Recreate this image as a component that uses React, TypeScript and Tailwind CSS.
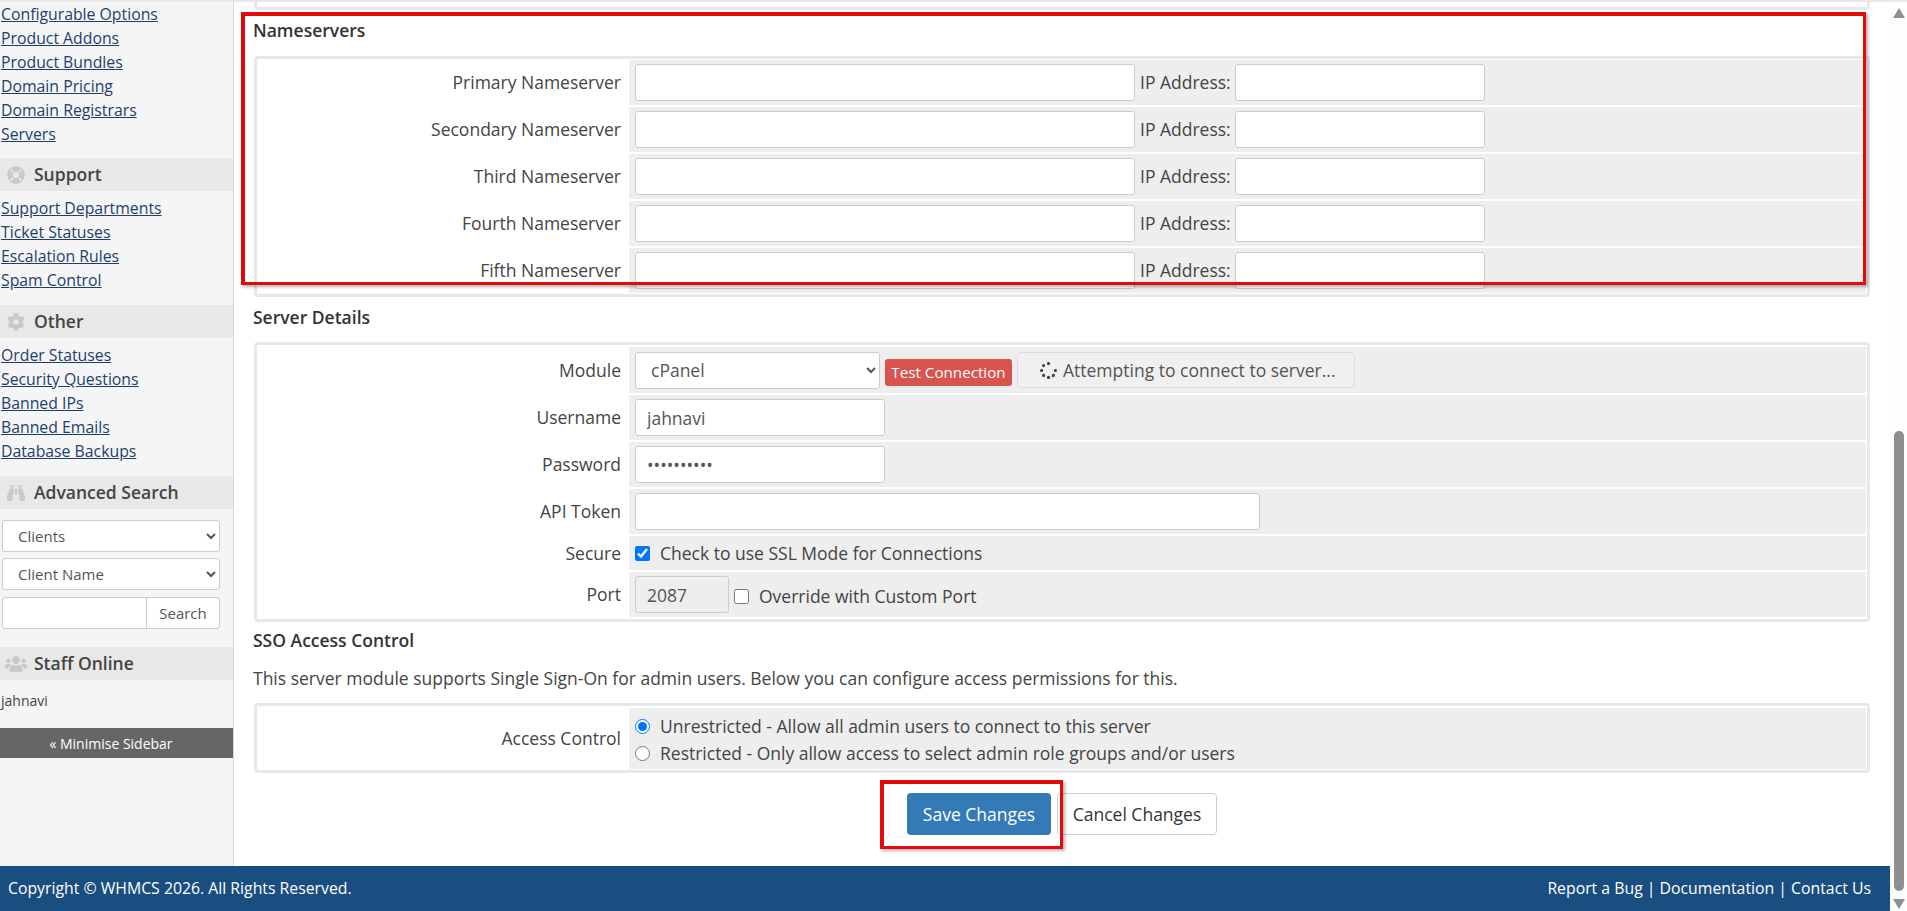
import type { ReactNode } from "react";
import { FaBinoculars, FaCog, FaLifeRing, FaSpinner, FaUsers } from "react-icons/fa";

const font = "font-['Open_Sans',sans-serif]";

function SideHeader({ icon, title }: { icon: ReactNode; title: string }) {
  return (
    <div className="flex h-[33px] items-center bg-[#e8e8e8]">
      <span className="flex w-[34px] justify-center pr-[3px] text-[18px] text-[#c8c8c8]">{icon}</span>
      <span className="text-[17.5px] font-semibold text-[#444]">{title}</span>
    </div>
  );
}

function SideLinks({ links, className }: { links: string[]; className: string }) {
  return (
    <ul className={className}>
      {links.map((link) => (
        <li key={link} className="h-[24px] pl-[1px] text-[15.8px] leading-[24px] text-[#1d3f6e] underline">
          {link}
        </li>
      ))}
    </ul>
  );
}

function Sidebar() {
  return (
    <aside className="w-[234px] shrink-0 border-r border-[#d8d8d8] bg-[#f5f5f5]">
      <SideLinks
        className="mb-[12px]"
        links={["Configurable Options", "Product Addons", "Product Bundles", "Domain Pricing", "Domain Registrars", "Servers"]}
      />
      <SideHeader icon={<FaLifeRing />} title="Support" />
      <SideLinks
        className="mb-[13px] mt-[5px]"
        links={["Support Departments", "Ticket Statuses", "Escalation Rules", "Spam Control"]}
      />
      <SideHeader icon={<FaCog />} title="Other" />
      <SideLinks
        className="mb-[13px] mt-[5px]"
        links={["Order Statuses", "Security Questions", "Banned IPs", "Banned Emails", "Database Backups"]}
      />
      <SideHeader icon={<FaBinoculars />} title="Advanced Search" />
      <div className="mt-[11px] flex flex-col gap-[6px] pl-[2px] pr-[13px] text-[15px] text-[#555]">
        <select className="h-[32px] rounded-[3px] border border-[#ccc] bg-white pl-[11px]" defaultValue="Clients">
          <option>Clients</option>
        </select>
        <select className="h-[32px] rounded-[3px] border border-[#ccc] bg-white pl-[11px]" defaultValue="Client Name">
          <option>Client Name</option>
        </select>
        <div className="mt-[1px] flex h-[32px] rounded-[3px] border border-[#ccc] bg-white">
          <input className="w-[144px] border-r border-[#ccc] outline-none" />
          <span className="flex-1 text-center text-[15px] leading-[30px]">Search</span>
        </div>
      </div>
      <div className="mt-[18px]">
        <SideHeader icon={<FaUsers className="text-[22px]" />} title="Staff Online" />
      </div>
      <div className="mt-[9px] h-[24px] pl-[1px] text-[14px] leading-[24px] text-[#444]">jahnavi</div>
      <div className="mt-[15px] flex h-[30px] items-center justify-center bg-[#666] pr-[11px] text-[14px] text-white">
        « Minimise Sidebar
      </div>
    </aside>
  );
}

function Panel({ children, className }: { children: ReactNode; className: string }) {
  return (
    <div className={`flex flex-col gap-[2px] rounded-[4px] border-[3px] border-[#e6e9eb] bg-white px-[1px] ${className}`}>
      {children}
    </div>
  );
}

function FormRow({ label, height, children }: { label: string; height: string; children: ReactNode }) {
  return (
    <div className={`flex ${height}`}>
      <div className="flex w-[371px] shrink-0 items-center justify-end pr-[8px] text-[#444]">{label}</div>
      <div className="flex flex-1 items-center bg-[#eee] pl-[6px]">{children}</div>
    </div>
  );
}

const inputClass = "h-[37px] rounded-[3px] border border-[#ccc] px-[11px] text-[#555] outline-none";

function NameserverRow({ label }: { label: string }) {
  return (
    <FormRow label={label} height="h-[45px]">
      <input className={`${inputClass} w-[500px] bg-white`} />
      <span className="ml-[5px] w-[95px] text-[#444]">IP Address:</span>
      <input className={`${inputClass} w-[250px] bg-white`} />
    </FormRow>
  );
}

function Heading({ children, className }: { children: ReactNode; className: string }) {
  return <h2 className={`-ml-[1px] h-[24px] font-semibold leading-[24px] text-[#333] ${className}`}>{children}</h2>;
}

function Main() {
  return (
    <main className="flex-1 px-[20px] text-[17.5px]">
      <div className="h-[8px] rounded-b-[4px] border-x-[3px] border-b-[3px] border-[#e6e9eb] bg-white" />

      <Heading className="mb-[14px] mt-[8px]">Nameservers</Heading>
      <Panel className="py-[1px]">
        <NameserverRow label="Primary Nameserver" />
        <NameserverRow label="Secondary Nameserver" />
        <NameserverRow label="Third Nameserver" />
        <NameserverRow label="Fourth Nameserver" />
        <NameserverRow label="Fifth Nameserver" />
      </Panel>

      <Heading className="mb-[13px] mt-[8px]">Server Details</Heading>
      <Panel className="py-[2px]">
        <FormRow label="Module" height="h-[46px]">
          <select className={`${inputClass} w-[245px] bg-white`} defaultValue="cPanel">
            <option>cPanel</option>
          </select>
          <span className="ml-[5px] mt-[4px] flex h-[27px] w-[127px] items-center justify-center rounded-[3px] bg-[#d9534f] text-[15.2px] text-white">
            Test Connection
          </span>
          <div className="ml-[5px] flex h-[36px] w-[338px] items-center rounded-[4px] border border-[#ddd] bg-[#f0f0f0] pl-[22px] text-[#555]">
            <FaSpinner className="mr-[6px] text-[17px] text-[#444]" />
            Attempting to connect to server...
          </div>
        </FormRow>
        <FormRow label="Username" height="h-[45px]">
          <input className={`${inputClass} w-[250px] bg-white`} value="jahnavi" readOnly />
        </FormRow>
        <FormRow label="Password" height="h-[45px]">
          <input className={`${inputClass} w-[250px] bg-white`} type="password" value="••••••••••" readOnly />
        </FormRow>
        <FormRow label="API Token" height="h-[45px]">
          <input className={`${inputClass} w-[625px] bg-white`} />
        </FormRow>
        <FormRow label="Secure" height="h-[34px]">
          <label className="flex items-center text-[#444]">
            <input type="checkbox" defaultChecked className="mr-[10px] h-[15px] w-[15px]" />
            Check to use SSL Mode for Connections
          </label>
        </FormRow>
        <FormRow label="Port" height="h-[45px]">
          <input className={`${inputClass} w-[94px] bg-[#eee]`} value="2087" readOnly />
          <label className="ml-[5px] mt-[3px] flex items-center text-[#444]">
            <input type="checkbox" className="mr-[10px] h-[15px] w-[15px]" />
            Override with Custom Port
          </label>
        </FormRow>
      </Panel>

      <Heading className="mt-[6px]">SSO Access Control</Heading>
      <p className="-ml-[1px] mt-[14px] h-[24px] leading-[24px] text-[#444]">
        This server module supports Single Sign-On for admin users. Below you can configure access permissions for this.
      </p>
      <Panel className="mt-[13px] pb-[1px] pt-[2px]">
        <FormRow label="Access Control" height="h-[61px]">
          <div className="flex flex-col pt-[3px] text-[#444]">
            <label className="flex h-[27px] items-center">
              <input type="radio" name="access" defaultChecked className="mr-[10px] h-[15px] w-[15px]" />
              Unrestricted - Allow all admin users to connect to this server
            </label>
            <label className="flex h-[27px] items-center">
              <input type="radio" name="access" className="mr-[10px] h-[15px] w-[15px]" />
              Restricted - Only allow access to select admin role groups and/or users
            </label>
          </div>
        </FormRow>
      </Panel>

      <div className="mt-[20px] flex justify-center gap-[6px]">
        <span className="flex h-[42px] w-[144px] items-center justify-center rounded-[4px] bg-[#337ab7] text-white">
          Save Changes
        </span>
        <span className="flex h-[42px] w-[160px] items-center justify-center rounded-[4px] border border-[#ccc] bg-white text-[#333]">
          Cancel Changes
        </span>
      </div>
    </main>
  );
}

function Scrollbar() {
  return (
    <div className="flex w-[17px] shrink-0 flex-col items-center bg-[#fdfdfd]">
      <svg className="mt-[6px]" width="12" height="10" viewBox="0 0 12 10">
        <path d="M6 0l6 10H0z" fill="#8f8f8f" />
      </svg>
      <div className="mt-auto h-[460px] w-[10px] rounded-[5px] bg-[#8f8f8f]" />
      <svg className="mb-[2px] mt-[8px]" width="12" height="10" viewBox="0 0 12 10">
        <path d="M0 0h12L6 10z" fill="#8f8f8f" />
      </svg>
    </div>
  );
}

export default function App() {
  return (
    <div className={`relative flex h-[911px] overflow-hidden border-t-2 border-[#e8e8e8] bg-white ${font}`}>
      <div className="flex min-w-0 flex-1 flex-col">
        <div className="flex flex-1">
          <Sidebar />
          <Main />
        </div>
        <footer className="flex h-[45px] shrink-0 items-center justify-between bg-[#1a4d80] pl-[8px] pr-[19px] pt-[1px] text-[15.8px] text-white">
          <span>Copyright © WHMCS 2026. All Rights Reserved.</span>
          <span>Report a Bug | Documentation | Contact Us</span>
        </footer>
      </div>
      <Scrollbar />

      {/* red annotation boxes */}
      <div className="absolute left-[241px] top-[10px] h-[273px] w-[1625px] border-[3px] border-l-4 border-t-4 border-[#e50a0a] shadow-[2px_2px_3px_rgba(0,0,0,0.3)]" />
      <div className="absolute left-[880px] top-[778px] h-[69px] w-[183px] border-[3px] border-l-4 border-t-4 border-[#e50a0a] shadow-[2px_2px_3px_rgba(0,0,0,0.3)]" />
    </div>
  );
}
